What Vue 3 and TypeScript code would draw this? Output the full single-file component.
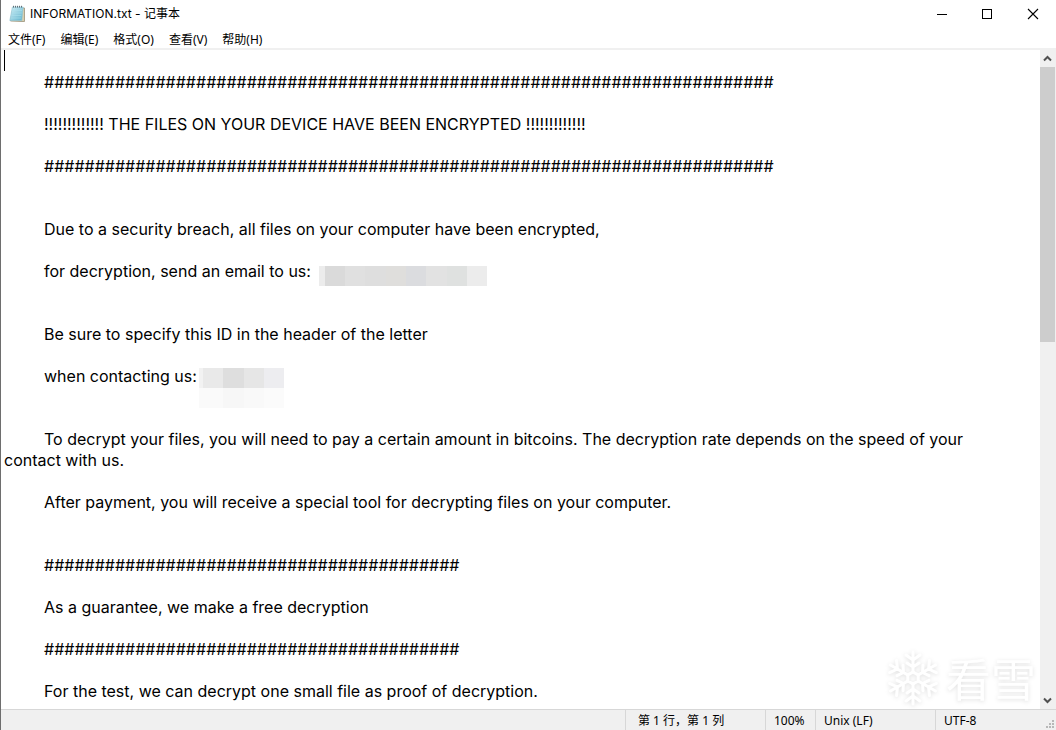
<script setup lang="ts">
import { ref } from 'vue'

const menus: string[] = ['文件(F)', '编辑(E)', '格式(O)', '查看(V)', '帮助(H)']

const longRule = '#'.repeat(72)
const shortRule = '#'.repeat(41)
const bangs = '!'.repeat(13)

const lines: string[] = [
  '',
  `\t${longRule}`,
  '',
  `\t${bangs} THE FILES ON YOUR DEVICE HAVE BEEN ENCRYPTED ${bangs}`,
  '',
  `\t${longRule}`,
  '',
  '',
  '\tDue to a security breach, all files on your computer have been encrypted,',
  '',
  '\tfor decryption, send an email to us:',
  '',
  '',
  '\tBe sure to specify this ID in the header of the letter',
  '',
  '\twhen contacting us:',
  '',
  '',
  '\tTo decrypt your files, you will need to pay a certain amount in bitcoins. The decryption rate depends on the speed of your contact with us.',
  '',
  '\tAfter payment, you will receive a special tool for decrypting files on your computer.',
  '',
  '',
  `\t${shortRule}`,
  '',
  '\tAs a guarantee, we make a free decryption',
  '',
  `\t${shortRule}`,
  '',
  '\tFor the test, we can decrypt one small file as proof of decryption.',
]
const content = ref<string>(lines.join('\n'))
const arms: number[] = [0, 60, 120, 180, 240, 300]
</script>

<template>
  <div class="window">
    <header class="titlebar">
      <svg class="app-icon" width="16" height="18" viewBox="0 0 16 18" aria-hidden="true">
        <defs>
          <linearGradient id="page" x1="0" y1="0" x2="1" y2="1">
            <stop offset="0" stop-color="#d3f0f6" />
            <stop offset="1" stop-color="#5fb2cc" />
          </linearGradient>
        </defs>
        <path d="M4 3H15.5V16.5H13L1.500 16Z" fill="#d9cfae" stroke="#9a927a" stroke-width=".8" />
        <path d="M3.400 2H14.200L12.800 15.500H.8Z" fill="url(#page)" stroke="#8fc5d4" stroke-width=".6" />
        <path d="M3.200 5.500H13M2.900 8H12.700M2.400 10.500H12.400M2.100 13H12.100" stroke="#a9e0ec" stroke-width=".6" />
        <path d="M4.500 .8V2.600M6.500 .8V2.600M8.500 .8V2.600M10.500 .8V2.600M12.500 .8V2.600" stroke="#55636a" stroke-width=".9" />
      </svg>
      <h1 class="title">INFORMATION.txt - 记事本</h1>
      <div class="controls">
        <button class="control" type="button" aria-label="最小化">
          <svg width="12" height="12" viewBox="0 0 12 12"><path d="M2 6.500H12" stroke="#000" /></svg>
        </button>
        <button class="control" type="button" aria-label="最大化">
          <svg width="12" height="12" viewBox="0 0 12 12"><rect x="1.500" y="1.500" width="9" height="9" fill="none" stroke="#000" /></svg>
        </button>
        <button class="control" type="button" aria-label="关闭">
          <svg width="12" height="12" viewBox="0 0 12 12"><path d="M1 1L11 11M11 1L1 11" stroke="#000" stroke-width="1.100" /></svg>
        </button>
      </div>
    </header>

    <nav class="menubar">
      <button v-for="menu in menus" :key="menu" class="menu" type="button">{{ menu }}</button>
    </nav>

    <main class="editor">
      <div class="page">
        <textarea v-model="content" class="text" aria-label="文本编辑器" spellcheck="false"></textarea>
        <span class="caret"></span>
        <div class="mask mask-mail"></div>
        <div class="mask mask-id"></div>
        <div class="mask mask-id-fade"></div>
        <div class="watermark">
          <svg width="54" height="58" viewBox="-27 -29 54 58" aria-hidden="true">
            <g fill="none" stroke="#fff" stroke-width="3" stroke-linecap="round" stroke-linejoin="round">
              <path d="M0 -6L5.200 -3V3L0 6L-5.200 3V-3Z" />
              <path v-for="arm in arms" :key="arm" :transform="`rotate(${arm})`" d="M0 -6V-26M-7 -23L0 -18L7 -23M-6 -15L0 -11L6 -15" />
            </g>
          </svg>
          <span class="brand">看雪</span>
        </div>
      </div>
      <div class="scrollbar">
        <button class="arrow" type="button" aria-label="向上滚动">
          <svg width="9" height="7" viewBox="0 0 9 7"><path d="M1 5.500L4.500 2L8 5.500" fill="none" stroke="#505050" stroke-width="2" /></svg>
        </button>
        <div class="track"><div class="thumb"></div></div>
        <button class="arrow" type="button" aria-label="向下滚动">
          <svg width="9" height="7" viewBox="0 0 9 7"><path d="M1 1.500L4.500 5L8 1.500" fill="none" stroke="#505050" stroke-width="2" /></svg>
        </button>
      </div>
    </main>

    <footer class="status">
      <span class="cell position">第 1 行，第 1 列</span>
      <span class="cell zoom">100%</span>
      <span class="cell ending">Unix (LF)</span>
      <span class="cell encoding">UTF-8</span>
      <svg class="grip" width="9" height="9" viewBox="0 0 9 9" aria-hidden="true">
        <path d="M6 0h2v2h-2zM3 3h2v2h-2zM6 3h2v2h-2zM0 6h2v2h-2zM3 6h2v2h-2zM6 6h2v2h-2z" fill="#b8b8b8" />
      </svg>
    </footer>
  </div>
</template>

<style>
body {
  margin: 0;
}
</style>

<style scoped>
.window {
  box-sizing: border-box;
  display: flex;
  flex-direction: column;
  height: 100vh;
  border-left: 1px solid #6e6e6e;
  background: #fff;
  color: #000;
  font-family: "Noto Sans", "Noto Sans CJK SC", sans-serif;
  font-size: 12px;
}
button {
  padding: 0;
  border: 0;
  background: transparent;
  color: inherit;
  font: inherit;
}
.titlebar {
  display: flex;
  align-items: center;
  height: 28px;
  padding-left: 8px;
}
.app-icon {
  margin-right: 5px;
}
.title {
  flex: 1;
  margin: 0;
  font-family: Inter, "Noto Sans CJK SC", sans-serif;
  font-size: 12px;
  font-weight: 400;
  line-height: 16px;
}
.controls {
  display: flex;
}
.control {
  display: grid;
  place-items: center;
  width: 46px;
  height: 28px;
}
.menubar {
  display: flex;
  gap: 15px;
  height: 20px;
  padding-left: 7px;
  border-bottom: 2px solid #f0f0f0;
}
.menu {
  padding-top: 2px;
  line-height: 20px;
  white-space: nowrap;
}
.editor {
  display: flex;
  flex: 1;
  min-height: 0;
}
.page {
  position: relative;
  flex: 1;
}
.text {
  display: block;
  box-sizing: border-box;
  width: 100%;
  height: 100%;
  margin: 0;
  padding: 1px 40px 0 3px;
  border: 0;
  outline: 0;
  resize: none;
  overflow: hidden;
  background: transparent;
  color: #000;
  font-family: Inter, "Noto Sans CJK SC", sans-serif;
  font-size: 16px;
  line-height: 21px;
  tab-size: 40px;
}
.caret {
  position: absolute;
  top: 0;
  left: 3px;
  width: 1px;
  height: 21px;
  background: #000;
}
.mask {
  position: absolute;
}
.mask-mail {
  top: 216px;
  left: 318px;
  width: 168px;
  height: 20px;
  background: linear-gradient(90deg, #ececec 6px, #dadada 6px 26px, #e0e0e0 26px 46px, #dedede 46px 67px, #dfdedc 67px 87px, #dbdcdf 87px 107px, #e2e2e2 107px 128px, #dfe1e0 128px 148px, #ececec 148px);
}
.mask-id,
.mask-id-fade {
  left: 198px;
  width: 85px;
  height: 20px;
}
.mask-id {
  top: 318px;
  background: linear-gradient(90deg, #f2f2f2 4px, #e9e9e9 4px 24px, #dedede 24px 45px, #e6e6e6 45px 65px, #ededf0 65px);
}
.mask-id-fade {
  top: 338px;
  background: linear-gradient(90deg, #fafafa 24px, #f7f7f7 24px 45px, #f9f9f9 45px 65px, #fbfbfb 65px);
}
.watermark {
  position: absolute;
  right: 4px;
  bottom: 2px;
  display: flex;
  align-items: center;
  gap: 6px;
  pointer-events: none;
  filter: drop-shadow(0 1px 2px rgba(0, 0, 0, 0.12));
}
.brand {
  color: #fff;
  font-family: "Noto Sans CJK SC", sans-serif;
  font-size: 45px;
  font-weight: 400;
  line-height: 58px;
}
.scrollbar {
  display: flex;
  flex-direction: column;
  width: 16px;
  background: #f0f0f0;
}
.arrow {
  display: grid;
  place-items: center;
  width: 15px;
  height: 17px;
}
.track {
  flex: 1;
}
.thumb {
  width: 15px;
  height: 44%;
  background: #cdcdcd;
}
.status {
  position: relative;
  display: flex;
  justify-content: flex-end;
  height: 20px;
  border-top: 1px solid #d7d7d7;
  background: #f0f0f0;
  line-height: 22px;
}
.cell {
  box-sizing: border-box;
  padding-left: 8px;
  border-left: 1px solid #d7d7d7;
  white-space: nowrap;
}
.position {
  width: 140px;
  padding-left: 12px;
}
.zoom {
  width: 50px;
}
.ending {
  width: 120px;
}
.encoding {
  width: 121px;
}
.grip {
  position: absolute;
  right: 1px;
  bottom: 1px;
}
</style>
